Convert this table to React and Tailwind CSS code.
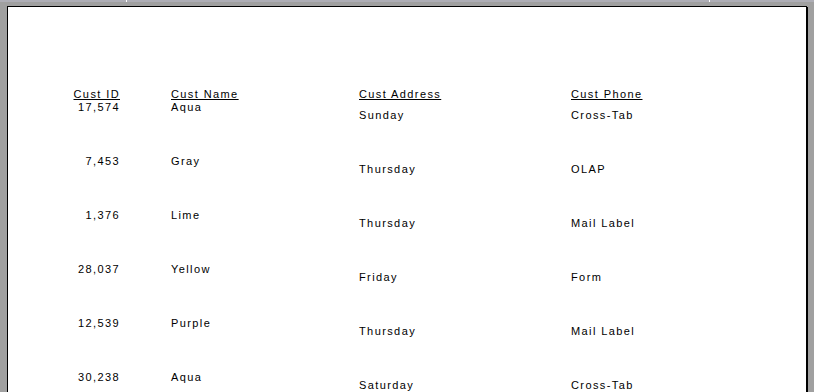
import React from "react";

const rows = [
  ["17,574", "Aqua", "Sunday", "Cross-Tab"],
  ["7,453", "Gray", "Thursday", "OLAP"],
  ["1,376", "Lime", "Thursday", "Mail Label"],
  ["28,037", "Yellow", "Friday", "Form"],
  ["12,539", "Purple", "Thursday", "Mail Label"],
  ["30,238", "Aqua", "Saturday", "Cross-Tab"],
];

export default function App() {
  return (
    <div
      className="relative h-[392px] w-[814px] overflow-hidden bg-[#a0a0a0] text-black"
      style={{ fontFamily: '"Liberation Sans", Arial, sans-serif' }}
    >
      <div className="relative h-[2px] w-full bg-[#aeaeb6]">
        <div className="absolute left-[126px] top-0 h-[2px] w-[1px] bg-white" />
        <div className="absolute left-[709px] top-0 h-[2px] w-[1px] bg-white" />
      </div>
      <div className="ml-[7px] mt-[4px] h-[600px] w-[800px] border border-black bg-white pt-[81px] text-[11px] leading-[12px] tracking-[1.4px] shadow-[1px_1px_0_0_#000]">
        <div className="flex h-[13px]">
          <div className="w-[112px] text-right">
            <span className="underline underline-offset-[1px]">Cust ID</span>
          </div>
          <div className="ml-[51px] w-[188px]">
            <span className="underline underline-offset-[1px]">Cust Name</span>
          </div>
          <div className="w-[212px]">
            <span className="underline underline-offset-[1px]">Cust Address</span>
          </div>
          <div className="flex-1">
            <span className="underline underline-offset-[1px]">Cust Phone</span>
          </div>
        </div>
        {rows.map((r, i) => (
          <div key={i} className="flex h-[54px]">
            <div className="w-[112px] text-right">{r[0]}</div>
            <div className="ml-[51px] w-[188px]">{r[1]}</div>
            <div className="w-[212px] pt-[8px]">{r[2]}</div>
            <div className="flex-1 pt-[8px]">{r[3]}</div>
          </div>
        ))}
      </div>
    </div>
  );
}
